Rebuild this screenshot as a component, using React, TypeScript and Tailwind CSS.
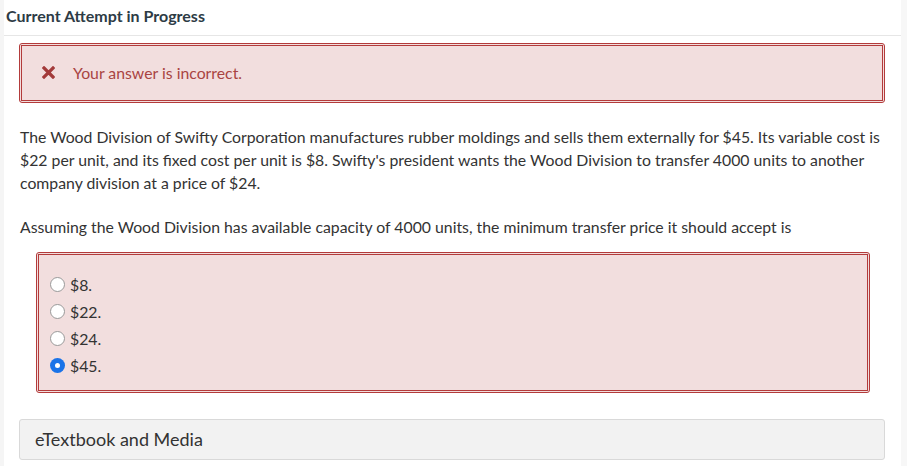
export default function App() {
  const options = ["$8.", "$22.", "$24.", "$45."];
  return (
    <div
      className="flex h-[466px] w-[907px] overflow-hidden bg-white text-[#333]"
      style={{ fontFamily: "Lato, 'Open Sans', sans-serif" }}
    >
      <div className="w-[4px] shrink-0 bg-[#f5f5f5]" />
      <div className="w-[897px] shrink-0">
        <h1 className="border-b border-[#e6e6e6] pb-[8px] pl-[2px] pt-[5px] text-[16px] font-bold leading-[22px] text-[#2d3b45]">
          Current Attempt in Progress
        </h1>
        <div className="pl-[15px] pr-[16px] pt-[7px]">
          {/* feedback */}
          <div className="rounded-[3px] border border-[#b33b3b] bg-[#f2dede] p-px">
            <div className="flex h-[56px] items-center border border-[#b33b3b] pl-[20px]">
              <svg width="13" height="13" viewBox="0 0 13 13" className="mt-[-2px]">
                <path d="M2 2 L11 11 M11 2 L2 11" stroke="#a33a3a" strokeWidth="3.2" strokeLinecap="square" />
              </svg>
              <span className="ml-[18px] text-[15.8px] text-[#a94442]">Your answer is incorrect.</span>
            </div>
          </div>

          <p className="mt-[22px] pl-px text-[15.8px] leading-[23px] text-[#333]">
            The Wood Division of Swifty Corporation manufactures rubber moldings and sells them externally for $45. Its variable cost is $22 per unit, and its fixed cost per unit is $8. Swifty's president wants the Wood Division to transfer 4000 units to another company division at a price of $24.
          </p>
          <p className="mt-[21px] pl-px text-[15.8px] leading-[23px] text-[#333]">
            Assuming the Wood Division has available capacity of 4000 units, the minimum transfer price it should accept is
          </p>

          <div className="ml-[17px] mr-[15px] mt-[14px] rounded-[3px] border border-[#b33b3b] bg-[#f2dede] p-px">
            <div className="flex h-[137px] flex-col border border-[#b33b3b] pl-[11px] pt-[16px]">
              {options.map((o, i) => (
                <label key={o} className="flex h-[27px] items-center text-[15.8px] text-[#333]">
                  {i === 3 ? (
                    <span className="flex h-[15px] w-[15px] items-center justify-center rounded-full bg-[#1a73e8]">
                      <span className="h-[5px] w-[5px] rounded-full bg-white" />
                    </span>
                  ) : (
                    <span className="h-[15px] w-[15px] rounded-full border border-[#999] bg-white" />
                  )}
                  <span className="ml-[5px]">{o}</span>
                </label>
              ))}
            </div>
          </div>

          <div className="mt-[26px] flex h-[41px] items-center rounded-[3px] border border-[#d9d9d9] bg-[#f2f2f2] pl-[15px] text-[18px] text-[#333]">
            eTextbook and Media
          </div>
        </div>
      </div>
      <div className="flex-1 bg-[#f7f7f7]" />
    </div>
  );
}
